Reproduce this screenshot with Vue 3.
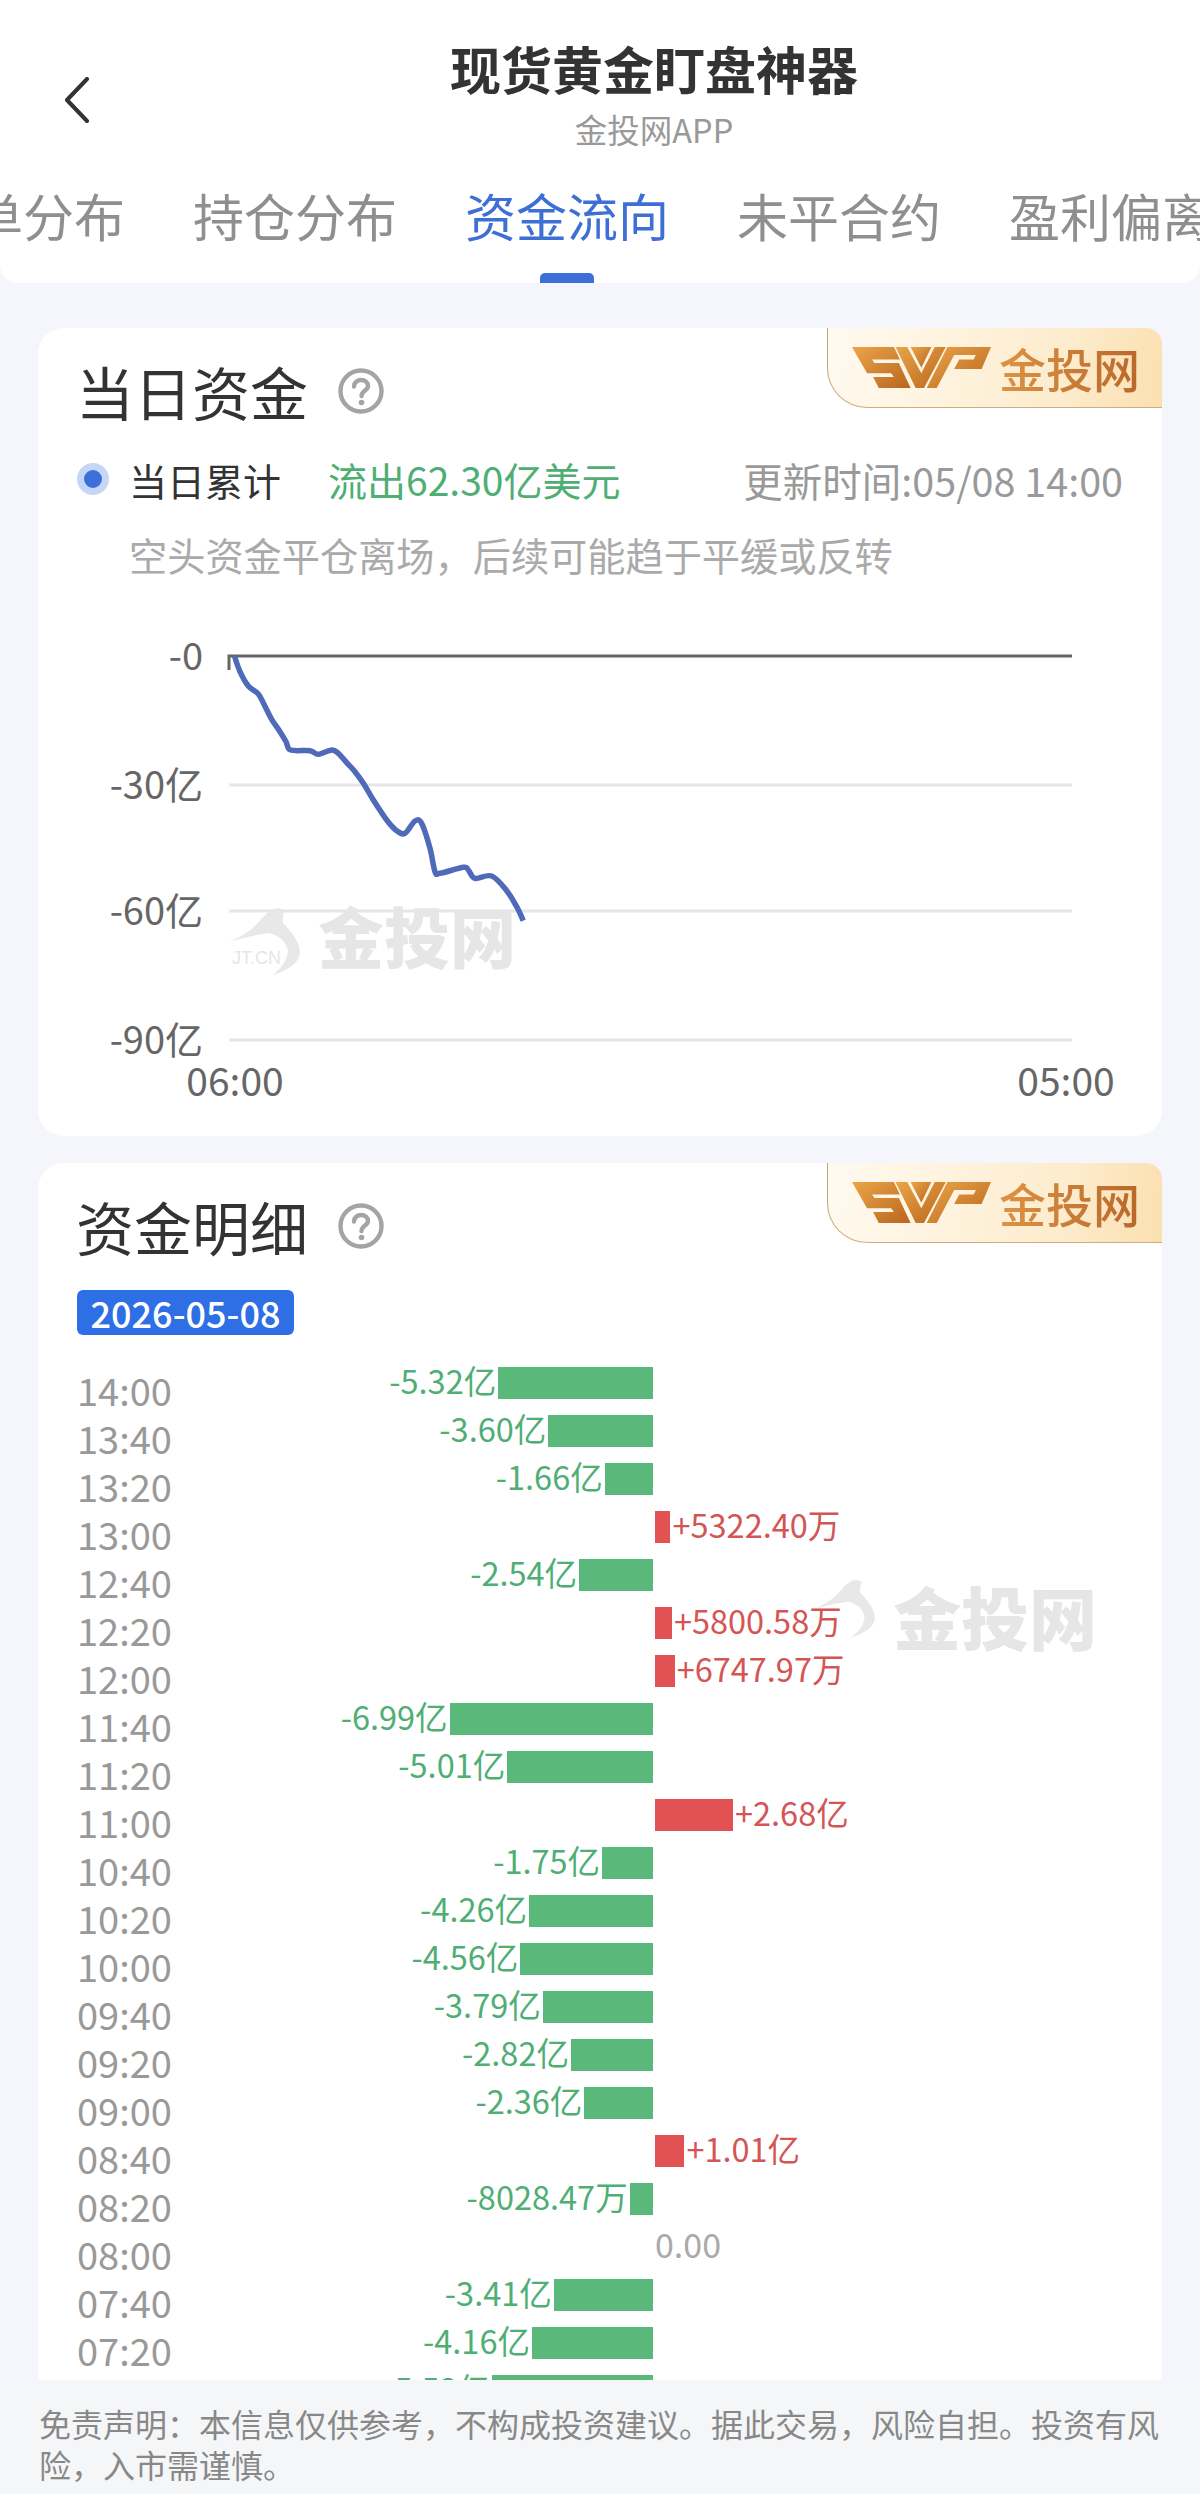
<script setup>
const tabs = ['挂单分布', '持仓分布', '资金流向', '未平合约', '盈利偏离']

const yTicks = [
  { label: '-0', y: 656 },
  { label: '-30亿', y: 785 },
  { label: '-60亿', y: 911 },
  { label: '-90亿', y: 1040 },
]

// traced from the curve, as [x, y] in page pixels
const points = [
  [463, 107], [480, 155], [505, 198], [535, 222], [553, 255], [575, 298], [600, 335], [618, 365],
  [632, 390], [690, 392], [715, 403], [755, 390], [775, 400], [800, 428], [825, 455], [850, 490],
  [880, 540], [920, 600], [950, 632], [975, 640], [1005, 603], [1025, 610], [1050, 685], [1065, 755],
  [1080, 760], [1150, 742], [1165, 750], [1185, 775], [1235, 768], [1280, 812], [1310, 860], [1330, 902],
].map(([x, y]) => [80 + x / 3, 620 + y / 3])

function smooth(pts) {
  let d = `M${pts[0][0]} ${pts[0][1]}`
  for (let i = 0; i < pts.length - 1; i++) {
    const p0 = pts[i - 1] || pts[i]
    const p1 = pts[i]
    const p2 = pts[i + 1]
    const p3 = pts[i + 2] || p2
    const c1x = p1[0] + (p2[0] - p0[0]) / 6
    const c1y = p1[1] + (p2[1] - p0[1]) / 6
    const c2x = p2[0] - (p3[0] - p1[0]) / 6
    const c2y = p2[1] - (p3[1] - p1[1]) / 6
    d += ` C${c1x} ${c1y} ${c2x} ${c2y} ${p2[0]} ${p2[1]}`
  }
  return d
}

const linePath = smooth(points)

const PX_PER_YI = 29.1

const rows = [
  ['14:00', -5.32, '-5.32亿'],
  ['13:40', -3.6, '-3.60亿'],
  ['13:20', -1.66, '-1.66亿'],
  ['13:00', 0.5322, '+5322.40万'],
  ['12:40', -2.54, '-2.54亿'],
  ['12:20', 0.58, '+5800.58万'],
  ['12:00', 0.6748, '+6747.97万'],
  ['11:40', -6.99, '-6.99亿'],
  ['11:20', -5.01, '-5.01亿'],
  ['11:00', 2.68, '+2.68亿'],
  ['10:40', -1.75, '-1.75亿'],
  ['10:20', -4.26, '-4.26亿'],
  ['10:00', -4.56, '-4.56亿'],
  ['09:40', -3.79, '-3.79亿'],
  ['09:20', -2.82, '-2.82亿'],
  ['09:00', -2.36, '-2.36亿'],
  ['08:40', 1.01, '+1.01亿'],
  ['08:20', -0.8028, '-8028.47万'],
  ['08:00', 0, '0.00'],
  ['07:40', -3.41, '-3.41亿'],
  ['07:20', -4.16, '-4.16亿'],
  ['07:00', -5.53, '-5.53亿'],
].map(([time, value, text]) => ({ time, value, text, width: Math.abs(value) * PX_PER_YI + 'px' }))
</script>

<template>
  <div class="page">
    <svg class="defs" width="0" height="0" aria-hidden="true">
      <defs>
        <linearGradient id="svpGold" x1="0" y1="0" x2="1" y2="1">
          <stop offset="0" stop-color="#eba548" />
          <stop offset="1" stop-color="#b9661f" />
        </linearGradient>
        <symbol id="svp" viewBox="25 28 415 112" preserveAspectRatio="none">
          <path d="M25 28 L150 28 L168 62 L85 62 L92 72 L165 72 L200 140 L105 140 L88 110 L150 110 L142 100 L70 100 Z" fill="url(#svpGold)" />
          <path d="M155 28 L190 28 L232 100 L272 28 L305 28 L240 140 L215 140 Z" fill="url(#svpGold)" />
          <path d="M200 28 L262 28 L232 85 Z" fill="url(#svpGold)" />
          <path d="M310 28 L440 28 L412 88 L330 88 L345 62 L388 62 L395 50 L330 50 L278 140 L248 140 Z" fill="url(#svpGold)" />
        </symbol>
        <symbol id="help" viewBox="0 0 46 46">
          <circle cx="23" cy="23" r="20.5" fill="none" stroke="#a4a4a4" stroke-width="4.4" />
          <path d="M16 18.5 C16 14.5 19.5 12 23 12 C27 12 30 14.5 30 18 C30 22.5 23.5 22.5 23.5 28" fill="none" stroke="#a4a4a4" stroke-width="4.4" stroke-linecap="round" />
          <circle cx="23.5" cy="34.5" r="2.8" fill="#a4a4a4" />
        </symbol>
        <symbol id="swoosh" viewBox="220 900 100 85">
          <path d="M228 942 Q250 934 263 917 Q270 909 278 908 L285 910 Q282 915 283 923 Q300 940 300 953 Q298 967 273 975 Q288 963 288 950 Q285 938 270 933 Q253 935 228 942 Z" fill="#e8e8e8" />
        </symbol>
      </defs>
    </svg>

    <header class="header">
      <div class="nav">
        <div class="back">
          <svg width="26" height="46" viewBox="0 0 26 46">
            <path d="M23 2 L3 23 L23 44" fill="none" stroke="#333" stroke-width="4" stroke-linecap="round" stroke-linejoin="round" />
          </svg>
        </div>
        <div class="nav-text">
          <div class="nav-title">现货黄金盯盘神器</div>
          <div class="nav-sub">金投网APP</div>
        </div>
      </div>
      <div class="tabs">
        <div v-for="tab in tabs" :key="tab" class="tab" :class="{ active: tab === '资金流向' }">
          <span>{{ tab }}</span>
          <i v-if="tab === '资金流向'" class="tab-bar"></i>
        </div>
      </div>
    </header>

    <main class="content">
      <section class="card card-today">
        <div class="badge">
          <svg class="badge-logo" width="139" height="41"><use href="#svp" width="139" height="41" /></svg>
          <span class="badge-text">金投网</span>
        </div>
        <div class="card-title">
          <span>当日资金</span>
          <svg width="46" height="46"><use href="#help" /></svg>
        </div>
        <div class="legend">
          <i class="dot"></i>
          <span class="legend-name">当日累计</span>
          <span class="legend-value">流出62.30亿美元</span>
          <span class="legend-time">更新时间:05/08 14:00</span>
        </div>
        <div class="hint">空头资金平仓离场，后续可能趋于平缓或反转</div>

        <svg class="chart" width="1124" height="500" viewBox="38 620 1124 500">
          <use href="#swoosh" x="220" y="900" width="100" height="85" />
          <text x="232" y="964" class="wm-en">JT.CN</text>
          <text x="318" y="963" class="wm-cn">金投网</text>
          <line v-for="t in yTicks.slice(1)" :key="t.label" x1="229" x2="1072" :y1="t.y" :y2="t.y" stroke="#e6e6e6" stroke-width="3" />
          <path d="M229 670 V656 H1072" fill="none" stroke="#666" stroke-width="3" />
          <text v-for="t in yTicks" :key="t.label" x="203" :y="t.y + 14" text-anchor="end" class="axis">{{ t.label }}</text>
          <text x="235" y="1096" text-anchor="middle" class="axis-x">06:00</text>
          <text x="1066" y="1096" text-anchor="middle" class="axis-x">05:00</text>
          <path :d="linePath" fill="none" stroke="#4f6ab8" stroke-width="5.5" stroke-linejoin="round" />
        </svg>
      </section>

      <section class="card card-detail">
        <div class="badge">
          <svg class="badge-logo" width="139" height="41"><use href="#svp" width="139" height="41" /></svg>
          <span class="badge-text">金投网</span>
        </div>
        <div class="card-title">
          <span>资金明细</span>
          <svg width="46" height="46"><use href="#help" /></svg>
        </div>
        <div class="date-tag">2026-05-08</div>

        <div class="rows">
          <div class="watermark">
            <svg width="62" height="72" viewBox="228 908 72 84"><use href="#swoosh" x="220" y="900" width="100" height="85" /></svg>
            <span class="watermark-text">金投网</span>
          </div>
          <div v-for="row in rows" :key="row.time" class="row">
            <span class="row-time">{{ row.time }}</span>
            <div class="row-neg">
              <template v-if="row.value < 0">
                <span class="row-label down">{{ row.text }}</span>
                <i class="bar bar-down" :style="{ width: row.width }"></i>
              </template>
            </div>
            <div class="row-pos">
              <template v-if="row.value > 0">
                <i class="bar bar-up" :style="{ width: row.width }"></i>
                <span class="row-label up">{{ row.text }}</span>
              </template>
              <span v-else-if="row.value === 0" class="row-label zero">{{ row.text }}</span>
            </div>
          </div>
        </div>
      </section>
    </main>

    <footer class="footer">免责声明：本信息仅供参考，不构成投资建议。据此交易，风险自担。投资有风险，入市需谨慎。</footer>
  </div>
</template>

<style scoped>
.page {
  display: flex;
  flex-direction: column;
  height: 2494px;
  overflow: hidden;
  background: #f4f6fb;
  color: #333;
  font-family: "Noto Sans CJK SC", "Noto Sans", sans-serif;
}

.defs {
  position: absolute;
}

.header {
  height: 283px;
  flex: none;
  box-sizing: border-box;
  padding-top: 38px;
  background: #fff;
  border-radius: 0 0 18px 18px;
  overflow: hidden;
}

.nav {
  display: flex;
}

.back {
  width: 108px;
  box-sizing: border-box;
  padding: 39px 0 0 64px;
}

.nav-text {
  flex: 1;
  text-align: center;
}

.nav-title {
  font-size: 51px;
  line-height: 60px;
  font-weight: 700;
  color: #333;
}

.nav-sub {
  margin-top: 11px;
  font-size: 32.5px;
  line-height: 40px;
  color: #999;
}

.tabs {
  display: flex;
  gap: 68px;
  margin: 36px 0 0 -79px;
}

.tab {
  display: flex;
  flex: none;
  flex-direction: column;
  align-items: center;
  font-size: 51px;
  line-height: 60px;
  color: #8f8f8f;
}

.tab.active {
  color: #3d6fd6;
}

.tab-bar {
  width: 54px;
  height: 10px;
  margin-top: 28px;
  background: #3d6fd6;
  border-radius: 5px 5px 0 0;
}

.content {
  flex: 1;
  min-height: 0;
  overflow: hidden;
  padding: 45px 38px 0;
}

.card {
  position: relative;
  background: #fff;
  border-radius: 26px;
}

.card-today {
  height: 808px;
}

.card-detail {
  margin-top: 27px;
  padding-bottom: 40px;
}

.badge {
  position: absolute;
  top: 0;
  right: 0;
  display: flex;
  align-items: center;
  gap: 8px;
  box-sizing: border-box;
  width: 335px;
  height: 80px;
  padding-left: 24px;
  background: linear-gradient(100deg, #fffaf0 0%, #fdeccd 70%, #fbdfb0 100%);
  border-left: 1.5px solid #c9a574;
  border-bottom: 1.5px solid #d0ad80;
  border-radius: 0 16px 0 40px;
}

.badge-text {
  font-size: 47px;
  font-weight: 500;
  line-height: 60px;
  background: linear-gradient(90deg, #dd9344, #b9672a);
  -webkit-background-clip: text;
  background-clip: text;
  color: transparent;
}

.card-title {
  display: flex;
  align-items: center;
  gap: 30px;
  height: 64px;
  padding: 31px 0 0 38px;
  font-size: 58px;
  color: #333;
}

.legend {
  display: flex;
  align-items: center;
  height: 50px;
  margin-top: 31px;
  padding: 0 39px;
  font-size: 38px;
}

.dot {
  width: 18px;
  height: 18px;
  margin-right: 20px;
  background: #3d6fdc;
  border: 7px solid #c6d6f6;
  border-radius: 50%;
}

.legend-value {
  margin-left: 47px;
  font-size: 39px;
  color: #4fae74;
}

.legend-time {
  margin-left: auto;
  font-size: 39.5px;
  color: #999;
}

.hint {
  margin-top: 26px;
  padding-left: 91px;
  font-size: 38.2px;
  line-height: 50px;
  color: #aaa;
}

.chart {
  display: block;
  margin-top: 40px;
}

.axis {
  font-size: 38px;
  fill: #666;
}

.axis-x {
  font-size: 39px;
  fill: #666;
}

.wm-cn {
  font-size: 66px;
  font-weight: 900;
  fill: #e6e6e6;
}

.wm-en {
  font-family: "Liberation Sans", sans-serif;
  font-size: 18px;
  fill: #e6e6e6;
}

.date-tag {
  width: 217px;
  height: 45px;
  margin: 32px 0 0 39px;
  background: #2f6fe6;
  border-radius: 6px;
  font-size: 36px;
  font-weight: 500;
  line-height: 45px;
  text-align: center;
  color: #fff;
}

.rows {
  position: relative;
  margin-top: 32px;
}

.watermark {
  position: absolute;
  top: 213px;
  left: 775px;
  display: flex;
  gap: 18px;
}

.watermark-text {
  font-size: 68px;
  font-weight: 900;
  line-height: 72px;
  color: #e6e6e6;
}

.row {
  position: relative;
  display: grid;
  grid-template-columns: 100px 476px 1fr;
  height: 48px;
  padding-left: 39px;
}

.row-time {
  font-size: 38px;
  line-height: 45px;
  color: #999;
}

.row-neg,
.row-pos {
  display: flex;
  align-items: center;
  gap: 2px;
  height: 32px;
}

.row-neg {
  justify-content: flex-end;
}

.row-pos {
  margin-left: 2px;
}

.bar {
  display: block;
  height: 32px;
}

.bar-down {
  background: #5ab87b;
}

.bar-up {
  background: #e35252;
}

.row-label {
  margin-bottom: 6px;
  font-size: 32.5px;
  line-height: 32px;
  white-space: nowrap;
}

.down {
  color: #4fae74;
}

.up {
  color: #d35555;
}

.zero {
  font-size: 34px;
  color: #aaa;
}

.footer {
  height: 114px;
  flex: none;
  box-sizing: border-box;
  padding: 23px 39px 0;
  background: #f5f6f8;
  font-size: 32px;
  line-height: 41px;
  color: #888;
}
</style>

<style>
html,
body {
  margin: 0;
}
</style>
